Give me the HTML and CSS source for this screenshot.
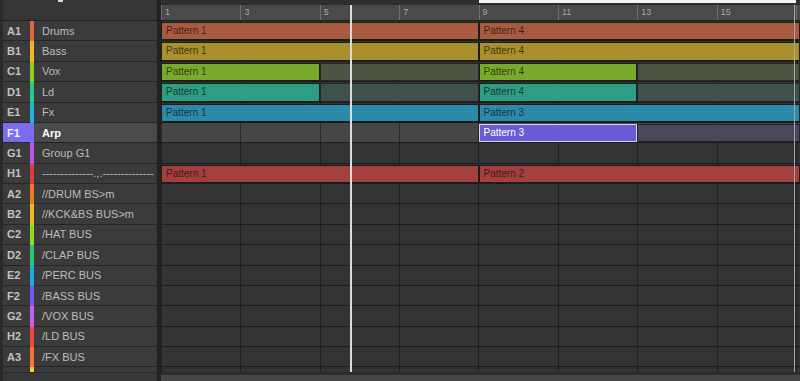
FILE: index.html
```html
<!DOCTYPE html>
<html>
<head>
<meta charset="utf-8">
<link rel="stylesheet" href="styles.css">
</head>
<body>
<div class="app">
  <aside class="groups">
    <div class="groups-head"><span class="head-mark"></span></div>
    <div class="group-list">
      <div class="group"><span class="gid">A1</span><span class="gstripe c-a1"></span><span class="gname">Drums</span></div>
      <div class="group"><span class="gid">B1</span><span class="gstripe c-b1"></span><span class="gname">Bass</span></div>
      <div class="group"><span class="gid">C1</span><span class="gstripe c-c1"></span><span class="gname">Vox</span></div>
      <div class="group"><span class="gid">D1</span><span class="gstripe c-d1"></span><span class="gname">Ld</span></div>
      <div class="group"><span class="gid">E1</span><span class="gstripe c-e1"></span><span class="gname">Fx</span></div>
      <div class="group sel"><span class="gid">F1</span><span class="gstripe c-f1"></span><span class="gname">Arp</span></div>
      <div class="group"><span class="gid">G1</span><span class="gstripe c-g1"></span><span class="gname">Group G1</span></div>
      <div class="group"><span class="gid">H1</span><span class="gstripe c-h1"></span><span class="gname">--------------.,.--------------</span></div>
      <div class="group"><span class="gid">A2</span><span class="gstripe c-a2"></span><span class="gname">//DRUM BS&gt;m</span></div>
      <div class="group"><span class="gid">B2</span><span class="gstripe c-b2"></span><span class="gname">//KCK&amp;BS BUS&gt;m</span></div>
      <div class="group"><span class="gid">C2</span><span class="gstripe c-c2"></span><span class="gname">/HAT BUS</span></div>
      <div class="group"><span class="gid">D2</span><span class="gstripe c-d2"></span><span class="gname">/CLAP BUS</span></div>
      <div class="group"><span class="gid">E2</span><span class="gstripe c-e2"></span><span class="gname">/PERC BUS</span></div>
      <div class="group"><span class="gid">F2</span><span class="gstripe c-f2"></span><span class="gname">/BASS BUS</span></div>
      <div class="group"><span class="gid">G2</span><span class="gstripe c-g2"></span><span class="gname">/VOX BUS</span></div>
      <div class="group"><span class="gid">H2</span><span class="gstripe c-h2"></span><span class="gname">/LD BUS</span></div>
      <div class="group"><span class="gid">A3</span><span class="gstripe c-a3"></span><span class="gname">/FX BUS</span></div>
      <div class="group"><span class="gid"></span><span class="gstripe c-b3"></span><span class="gname"></span></div>
    </div>
    <div class="groups-foot"></div>
  </aside>
  <div class="divider"></div>
  <main class="arranger">
    <div class="loopbar"><span class="loop"></span></div>
    <div class="ruler">
      <span class="bar">1</span><span class="bar">3</span><span class="bar">5</span><span class="bar">7</span>
      <span class="bar">9</span><span class="bar">11</span><span class="bar">13</span><span class="bar">15</span>
      <span class="bar-rest"></span>
    </div>
    <div class="lanes">
      <div class="lane">
        <div class="clip p-a1 span-1-9">Pattern 1</div>
        <div class="clip p-a1 span-9-end">Pattern 4</div>
      </div>
      <div class="lane">
        <div class="clip p-b1 span-1-9">Pattern 1</div>
        <div class="clip p-b1 span-9-end">Pattern 4</div>
      </div>
      <div class="lane">
        <div class="clip p-c1 span-1-5">Pattern 1</div>
        <div class="clip ghost g-c1 span-5-9"></div>
        <div class="clip p-c1 span-9-13">Pattern 4</div>
        <div class="clip ghost g-c1 span-13-end"></div>
      </div>
      <div class="lane">
        <div class="clip p-d1 span-1-5">Pattern 1</div>
        <div class="clip ghost g-d1 span-5-9"></div>
        <div class="clip p-d1 span-9-13">Pattern 4</div>
        <div class="clip ghost g-d1 span-13-end"></div>
      </div>
      <div class="lane">
        <div class="clip p-e1 span-1-9">Pattern 1</div>
        <div class="clip p-e1 span-9-end">Pattern 3</div>
      </div>
      <div class="lane sel">
        <div class="clip p-f1 span-9-13">Pattern 3</div>
        <div class="clip ghost g-f1 span-13-end"></div>
      </div>
      <div class="lane"></div>
      <div class="lane">
        <div class="clip p-h1 span-1-9">Pattern 1</div>
        <div class="clip p-h1 span-9-end">Pattern 2</div>
      </div>
      <div class="lane"></div>
      <div class="lane"></div>
      <div class="lane"></div>
      <div class="lane"></div>
      <div class="lane"></div>
      <div class="lane"></div>
      <div class="lane"></div>
      <div class="lane"></div>
      <div class="lane"></div>
      <div class="lane"></div>
    </div>
    <div class="hscroll"></div>
    <div class="playhead"></div>
    <div class="loop-end"></div>
  </main>
</div>
</body>
</html>
```

FILE: styles.css
```css
* { box-sizing: border-box; }
html, body { margin: 0; padding: 0; }
body {
  width: 800px;
  height: 381px;
  overflow: hidden;
  background: #2a2a2a;
  font-family: "Liberation Sans", Arial, sans-serif;
}
.app {
  display: grid;
  grid-template-columns: 158px 3px 639px;
  height: 381px;
}

/* ---------- left group list ---------- */
.groups {
  display: flex;
  flex-direction: column;
  background: #393939;
  border-left: 3px solid #2a2a2a;
  border-right: 1px solid #1e1e1e;
}
.groups-head {
  height: 21px;
  flex: none;
  background: #363636;
  border-bottom: 1px solid #1f1f1f;
  display: flex;
  align-items: flex-start;
  padding-left: 55px;
}
.head-mark {
  width: 5px;
  height: 2px;
  background: #d8d8d8;
}
.group-list {
  height: 351px;
  flex: none;
  overflow: hidden;
  display: flex;
  flex-direction: column;
}
.group {
  height: 20.375px;
  flex: none;
  display: flex;
}
.gid {
  width: 27px;
  padding-left: 4px;
  display: flex;
  align-items: center;
  font-size: 11px;
  font-weight: bold;
  color: #c2c2c2;
  border-bottom: 1px solid #262626;
  background: #3b3b3b;
}
.gstripe {
  width: 4px;
  flex: none;
}
.gname {
  flex: 1;
  min-width: 0;
  padding-left: 8px;
  display: flex;
  align-items: center;
  font-size: 11px;
  color: #bcbcbc;
  white-space: nowrap;
  overflow: hidden;
  border-bottom: 1px solid #262626;
  background: #3b3b3b;
}
.group.sel .gid { background: #7b6cf0; color: #f4f4ff; }
.group.sel .gname { background: #4a4a4a; color: #ffffff; font-weight: bold; }
.groups-foot {
  flex: 1;
  background: #373737;
  border-top: 1px solid #2a2a2a;
}

.c-a1 { background: #e4663c; }
.c-b1 { background: #f0b820; }
.c-c1 { background: #8ccc20; }
.c-d1 { background: #28c88c; }
.c-e1 { background: #20b4dc; }
.c-f1 { background: #7b6cf0; }
.c-g1 { background: #b45ae6; }
.c-h1 { background: #dc3c3c; }
.c-a2 { background: #f07828; }
.c-b2 { background: #f0b820; }
.c-c2 { background: #8cdc28; }
.c-d2 { background: #28c878; }
.c-e2 { background: #20aadc; }
.c-f2 { background: #6e5af0; }
.c-g2 { background: #be64f0; }
.c-h2 { background: #f04646; }
.c-a3 { background: #f07832; }
.c-b3 { background: #f0cc28; }

.divider { background: #222222; }

/* ---------- arranger ---------- */
.arranger {
  position: relative;
  display: flex;
  flex-direction: column;
  background: #333333;
}
.loopbar {
  height: 5px;
  flex: none;
  background: #2e2e2e;
  display: grid;
  grid-template-columns: repeat(16, 39.6875px) 1fr;
}
.loop {
  grid-column: 9 / 17;
  height: 3px;
  background: #f4f4f4;
}
.ruler {
  height: 16px;
  flex: none;
  display: flex;
  background: #4a4a4a;
  border-bottom: 1px solid #1d1d1d;
}
.bar {
  width: 79.375px;
  flex: none;
  border-left: 1px solid #6e6e6e;
  padding-left: 3px;
  font-size: 9px;
  line-height: 15px;
  color: #a8a8a8;
}
.bar-rest { flex: 1; border-left: 1px solid #6e6e6e; }

.lanes {
  height: 351px;
  flex: none;
  overflow: hidden;
  display: flex;
  flex-direction: column;
  background-color: #333333;
  background-image: repeating-linear-gradient(to right, #1f1f1f 0 1px, transparent 1px 79.375px);
}
.lane {
  height: 20.375px;
  flex: none;
  display: grid;
  grid-template-columns: repeat(16, 39.6875px) 1fr;
  grid-template-rows: 1fr;
  border-bottom: 1px solid #1d1d1d;
}
.lane.sel {
  background-color: #464646;
  background-image: repeating-linear-gradient(to right, #2a2a2a 0 1px, transparent 1px 79.375px);
}
.clip {
  grid-row: 1;
  margin-top: 1px;
  border: 1px solid #1c1c1c;
  padding-left: 4px;
  font-size: 10px;
  line-height: 16px;
  color: rgba(20, 10, 5, 0.72);
  white-space: nowrap;
  overflow: hidden;
}
.span-1-9 { grid-column: 1 / 9; }
.span-9-end { grid-column: 9 / -1; }
.span-1-5 { grid-column: 1 / 5; }
.span-5-9 { grid-column: 5 / 9; }
.span-9-13 { grid-column: 9 / 13; }
.span-13-end { grid-column: 13 / -1; }

.p-a1 { background: #a85b40; }
.p-b1 { background: #a8902c; }
.p-c1 { background: #7aaa2c; }
.p-d1 { background: #2b9e84; }
.p-e1 { background: #2b8aaa; }
.p-h1 { background: #a33f3f; }
.p-f1 {
  background: #6a5ad6;
  border-color: #d6d6e6;
  color: #ffffff;
}
.ghost { border-color: #262626; }
.g-c1 { background: #4b5440; }
.g-d1 { background: #3d524d; }
.g-f1 { background: #4a4858; }

.hscroll {
  flex: 1;
  background: #474747;
  border-top: 3px solid #2c2c2c;
}
.playhead {
  position: absolute;
  left: 189px;
  top: 5px;
  width: 2px;
  height: 367px;
  background: #dcdcdc;
}
.loop-end {
  position: absolute;
  left: 633px;
  top: 5px;
  width: 1px;
  height: 367px;
  background: #a8a8a8;
}
```
